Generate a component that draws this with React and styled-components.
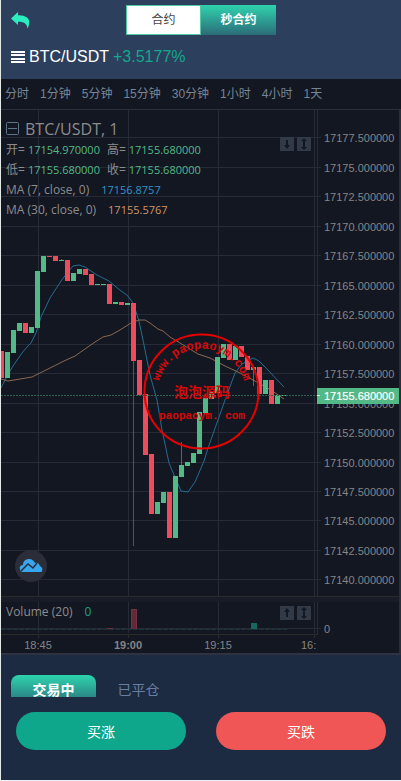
import React from 'react';
import styled, {createGlobalStyle, css} from 'styled-components';

const GlobalStyle = createGlobalStyle`
    body {
        margin: 0;
        background: #eef2f4;
        font-family: "Liberation Sans", "Noto Sans CJK SC", sans-serif;
    }
    * {
        box-sizing: border-box;
    }
    button {
        font-family: inherit;
        border: 0;
        padding: 0;
        background: none;
        cursor: pointer;
    }
`
const green = '#53b987';
const red = '#eb4d5c';
const grid = '#272b38';
const axisLine = '#2b2b2a';

const Page = styled.div`
    border-left: 1px solid #e3e9e6;
    background: #1c2b42;
`
const Header = styled.header`
    padding: 5px 10px 12px;
    background: #2c3f5c;
`
const TopBar = styled.div`
    display: grid;
    grid-template-columns: 1fr 150px 1fr;
    height: 30px;
`
const BackButton = styled.button`
    justify-self: start;
    height: 30px;
    line-height: 0;
`
const Segments = styled.div`
    display: flex;
`
const Segment = styled.button`
    width: 75px;
    height: 30px;
    font-size: 12px;
    line-height: 28px;
    color: #444;
    background: #fff;
    border: 1px solid #54c9a3;
    ${props => props.$active && css`
        color: #fff;
        font-weight: bold;
        border: 0;
        background: linear-gradient(#2fd3ad, #2b6c78);
    `}
`
const PairBar = styled.div`
    display: flex;
    align-items: center;
    gap: 4px;
    height: 32px;
    padding-top: 12px;
    font-size: 16px;
    line-height: 20px;
    color: #fff;
`
const PairName = styled.h1`
    margin: 0;
    font-size: 16px;
    font-weight: normal;
`
const Change = styled.span`
    color: #12a88c;
`
const MenuButton = styled.button`
    line-height: 0;
`
const Periods = styled.nav`
    display: flex;
    gap: 11px;
    height: 31px;
    padding: 0 4px;
    background: #131722;
    border-bottom: 1px solid #2c303d;
`
const Period = styled.button`
    font-size: 12px;
    line-height: 28px;
    white-space: nowrap;
    color: #758696;
`
const Chart = styled.section`
    position: relative;
    display: grid;
    grid-template-columns: 1fr 82px;
    background: #131722;
    border-right: 2px solid #2a2e3b;
    border-bottom: 2px solid #2f3241;
    svg {
        display: block;
    }
`
const Plot = styled.svg`
    width: 100%;
    height: 543px;
`
const Axis = styled.svg`
    width: 82px;
    height: 543px;
`
const AxisText = styled.text`
    font-size: 11px;
    fill: ${props => props.$light ? '#fff' : '#858585'};
    font-weight: ${props => props.$bold ? 'bold' : 'normal'};
`
const StampText = styled.text`
    font-family: "Liberation Mono", "Noto Sans CJK SC", monospace;
    font-weight: bold;
    font-size: ${props => props.$size};
    fill: #d80808;
`
const Legend = styled.div`
    position: absolute;
    top: 8px;
    left: 5px;
    font-family: "Open Sans", "Noto Sans CJK SC", sans-serif;
    font-size: 12px;
    color: #8c8c8c;
`
const LegendTitle = styled.div`
    display: flex;
    align-items: center;
    gap: 5px;
    height: 22px;
    font-size: 16px;
    font-weight: 500;
`
const LegendRow = styled.div`
    display: flex;
    gap: ${props => props.$wide ? '12px' : '3px'};
    height: 20px;
    line-height: 20px;
    white-space: nowrap;
`
const Value = styled.span`
    width: ${props => props.$fixed ? '76px' : 'auto'};
    font-size: ${props => props.$large ? '12px' : '11px'};
    font-weight: 500;
    color: ${props => props.color};
`
const VolumeLegend = styled(Legend)`
    top: 492px;
`
const Tools = styled.div`
    position: absolute;
    top: ${props => props.$top};
    right: 88px;
    display: flex;
    gap: 3px;
`
const ToolButton = styled.button`
    width: 14px;
    height: 14px;
    background: #323a48;
`
const Logo = styled.a`
    position: absolute;
    left: 14px;
    top: 440px;
    width: 32px;
    height: 32px;
    border-radius: 50%;
    background: #2b2e39;
`
const Tabs = styled.div`
    display: flex;
    height: 42px;
    padding: 20px 10px 0;
    overflow: hidden;
`
const Tab = styled.button`
    flex: none;
    width: 85px;
    height: 30px;
    font-size: 14px;
    line-height: 30px;
    color: #6a7f9f;
    ${props => props.$active && css`
        color: #fff;
        font-weight: bold;
        border-radius: 8px 8px 0 0;
        background: linear-gradient(#2dd5ae, #2b6c78);
    `}
`
const Actions = styled.div`
    display: grid;
    grid-template-columns: 1fr 1fr;
    gap: 30px;
    padding: 15px 15px 30px;
`
const TradeButton = styled.button`
    height: 38px;
    border-radius: 19px;
    font-size: 14px;
    color: #fff;
    background: ${props => props.$up ? '#0ea78b' : '#f05656'};
`

const periods = ['分时', '1分钟', '5分钟', '15分钟', '30分钟', '1小时', '4小时', '1天'];
const times = [{x: 37, label: '18:45'}, {x: 127, label: '19:00', bold: true}, {x: 217, label: '19:15'}];
const gridColumns = [37, 127, 217, 313];
const levels = [27, 57, 86, 116, 145, 175, 204, 234, 263, 293, 322, 352, 381, 410, 440, 469];

// direction, body top, body bottom, wick top, wick bottom
const candles = [
    ['r', 241, 268], ['g', 242, 268], ['g', 220, 243], ['g', 213, 221], ['r', 213, 223], ['g', 217, 223],
    ['g', 161, 218], ['g', 146, 162], ['r', 146, 147], ['r', 146, 151], ['g', 150, 151, 149, 151], ['r', 150, 171],
    ['g', 163, 171], ['g', 159, 164], ['r', 159, 165], ['r', 164, 175], ['g', 174, 175], ['g', 174, 175],
    ['r', 174, 194], ['g', 192, 194], ['r', 192, 195], ['g', 193, 195], ['r', 193, 251, 193, 436], ['r', 250, 285],
    ['r', 284, 345], ['r', 344, 404], ['g', 392, 404], ['g', 382, 393], ['r', 382, 428], ['g', 366, 428],
    ['g', 355, 367, 332, 367], ['g', 352, 356], ['g', 343, 353], ['g', 302, 344], ['g', 288, 303], ['g', 282, 289],
    ['g', 247, 283], ['g', 234, 248], ['r', 234, 250], ['g', 236, 250], ['r', 236, 247], ['r', 246, 260],
    ['g', 257, 260, 257, 276], ['r', 257, 284], ['g', 270, 284], ['r', 270, 294], ['g', 285, 294], ['g', 285, 286],
];
const ma7 = '0,278 5,268 12,256 21,243 26,237 30,233 35,223 40,207 49,188 60,171 67,162 72,156 78,155 84,157 96,165 108,171 120,181 126,185 132,193 138,211 143,235 149,265 156,290 161,320 168,353 176,372 180,381 187,382 194,372 203,351 207,338 212,324 224,290 234,263 241,254 252,248 258,251 265,258 283,277';
const ma30 = '0,269 7,271 19,269 31,267 39,263 49,258 63,251 74,246 84,239 94,232 102,227 110,225 119,220 130,213 138,210 144,210 149,213 157,219 162,221 169,227 179,233 197,244 209,248 224,256 239,263 254,271 270,280 283,289';

function Candle({data, index}){
    const [dir, top, bottom, high, low] = data;
    const fill = dir === 'g' ? green : red;
    const x = index * 6 - 2;
    return <g fill={fill}>
        {high && <rect x={x + 2} y={high} width="1" height={low - high} opacity="0.6"/>}
        <rect x={x} y={top} width="5" height={bottom - top}/>
    </g>
}
function Stamp(){
    return <g>
        <circle cx="200.5" cy="281.5" r="57" fill="none" stroke="#e60000" strokeWidth="2"/>
        <path id="stampArc" d="M157 276A44 44 0 0 1 244 276" fill="none"/>
        <StampText $size="12px" textAnchor="middle">
            <textPath href="#stampArc" startOffset="50%">www.paopaoym.com</textPath>
        </StampText>
        <StampText $size="14px" x="201" y="287" textAnchor="middle">泡泡源码</StampText>
        <StampText $size="11px" x="201" y="309" textAnchor="middle">paopaoym. com</StampText>
    </g>
}
function PricePlot(){
    return (
        <Plot>
            <g fill={grid}>
                {levels.map(y => <rect key={y} x="0" y={y} width="100%" height="1"/>)}
                <rect x="0" y="518" width="100%" height="1"/>
                {gridColumns.map(x => <rect key={x} x={x} y="0" width="1" height="523"/>)}
            </g>
            <rect x="0" y="486" width="100%" height="1" fill={axisLine}/>
            <rect x="0" y="487" width="100%" height="5" fill="#181c27"/>
            <rect x="0" y="524" width="100%" height="1" fill={axisLine}/>
            {gridColumns.map(x => <rect key={x} x={x} y="525" width="1" height="3" fill={axisLine}/>)}
            <polyline points={ma7} fill="none" stroke="#246c92"/>
            <polyline points={ma30} fill="none" stroke="#8a6850"/>
            {candles.map((data, i) => <Candle key={i} data={data} index={i}/>)}
            <line x1="0" y1="285.5" x2="100%" y2="285.5" stroke="#30604f" strokeDasharray="2 1"/>
            <rect x="106" y="518" width="6" height="1" fill="#742f3f"/>
            <rect x="130" y="499" width="6" height="20" fill="#5f2a39"/>
            <path d="M130.5 519V499.5H135.5V519" fill="none" stroke="#7a3040"/>
            <rect x="250" y="513" width="6" height="6" fill="#15675f"/>
            <path d="M0 519.5H286" stroke="#1b3439" strokeDasharray="5 1"/>
            {times.map(t => (
                <AxisText key={t.x} x={t.x} y="539" textAnchor="middle" $bold={t.bold}>{t.label}</AxisText>
            ))}
            <AxisText x="300" y="539">16:</AxisText>
            <Stamp/>
        </Plot>
    );
}
function PriceAxis(){
    return (
        <Axis>
            <rect x="0" y="0" width="1" height="525" fill={axisLine}/>
            <rect x="0" y="486" width="82" height="1" fill={axisLine}/>
            <rect x="0" y="487" width="82" height="5" fill="#181c27"/>
            {levels.map((y, i) => (
                <g key={y}>
                    <rect x="1" y={y} width="3" height="1" fill={axisLine}/>
                    <AxisText x="7" y={y + 5}>{(17177.5 - i * 2.5).toFixed(6)}</AxisText>
                </g>
            ))}
            <rect x="1" y="518" width="3" height="1" fill={axisLine}/>
            <AxisText x="7" y="523">0</AxisText>
            <rect x="0" y="278" width="82" height="16" fill={green}/>
            <rect x="0" y="285" width="3" height="1" fill="#cfeadd"/>
            <AxisText x="7" y="290" $light stroke="#fff" strokeWidth="0.2">17155.680000</AxisText>
        </Axis>
    );
}
function Tool({label, d}){
    return <ToolButton aria-label={label}>
        <svg width="14" height="14" viewBox="0 0 14 14" fill="#131722">
            <path d={d}/>
        </svg>
    </ToolButton>
}
const downArrow = 'M6 3H8V8H10L7 12L4 8H6Z';
const upArrow = 'M6 11H8V6H10L7 2L4 6H6Z';
const bothArrow = 'M7 1L10 4H8V10H10L7 13L4 10H6V4H4Z';

function TradingChart(){
    return (
        <Chart>
            <PricePlot/>
            <PriceAxis/>
            <Legend>
                <LegendTitle>
                    <svg width="14" height="14" viewBox="0 0 14 14" fill="none" stroke="#5d7587">
                        <rect x="0.5" y="0.5" width="12" height="12" rx="1"/>
                        <path d="M2 6.5H11"/>
                    </svg>
                    BTC/USDT, 1
                </LegendTitle>
                <LegendRow>
                    <span>开=</span><Value $fixed color={green}>17154.970000</Value>
                    <span>高=</span><Value color={green}>17155.680000</Value>
                </LegendRow>
                <LegendRow>
                    <span>低=</span><Value $fixed color={green}>17155.680000</Value>
                    <span>收=</span><Value color={green}>17155.680000</Value>
                </LegendRow>
                <LegendRow $wide>
                    <span>MA (7, close, 0)</span><Value color="#3094c4">17156.8757</Value>
                </LegendRow>
                <LegendRow $wide>
                    <span>MA (30, close, 0)</span><Value color="#cf9668">17155.5767</Value>
                </LegendRow>
            </Legend>
            <Tools $top="27px">
                <Tool label="下移" d={downArrow}/>
                <Tool label="最大化" d={bothArrow}/>
            </Tools>
            <Logo href="#" aria-label="图表">
                <svg width="32" height="32" viewBox="0 0 32 32">
                    <path d="M5 19C4 17 6 15 8 15C8 11 11 9 14 9C17 9 19 11 20 13C23 12 24 14 25 16C27 17 28 19 27 21C27 22 26 22 25 22H8C6 22 5 21 5 19Z" fill="#37a6ef"/>
                    <path d="M6 21L13 14L18 18L22 13" fill="none" stroke="#2b2e39" strokeWidth="1.5"/>
                </svg>
            </Logo>
            <VolumeLegend>
                <LegendRow $wide>
                    <span>Volume (20)</span><Value $large color="#21a08c">0</Value>
                </LegendRow>
            </VolumeLegend>
            <Tools $top="496px">
                <Tool label="上移" d={upArrow}/>
                <Tool label="最大化" d={bothArrow}/>
            </Tools>
        </Chart>
    );
}
export default function App() {
    return <>
        <GlobalStyle/>
        <Page>
            <Header>
                <TopBar>
                    <BackButton aria-label="返回">
                        <svg width="19" height="17" viewBox="0 0 19 17" fill="#2bedc0">
                            <path d="M0 6.5L7 0V3.3C14 3 18.5 6 18.3 10.5C18.2 12.5 17.5 15 16.3 16.5C16.4 12 13 9.5 7 9.7V13Z"/>
                        </svg>
                    </BackButton>
                    <Segments>
                        <Segment>合约</Segment>
                        <Segment $active>秒合约</Segment>
                    </Segments>
                </TopBar>
                <PairBar>
                    <MenuButton aria-label="菜单">
                        <svg width="14" height="12" viewBox="0 0 14 12" fill="#fff">
                            <path d="M0 0H14V2H0ZM0 3H14V5H0ZM0 7H14V9H0ZM0 10H14V12H0Z"/>
                        </svg>
                    </MenuButton>
                    <PairName>BTC/USDT</PairName>
                    <Change>+3.5177%</Change>
                </PairBar>
            </Header>
            <Periods>
                {periods.map(p => <Period key={p}>{p}</Period>)}
            </Periods>
            <TradingChart/>
            <Tabs>
                <Tab $active>交易中</Tab>
                <Tab>已平仓</Tab>
            </Tabs>
            <Actions>
                <TradeButton $up>买涨</TradeButton>
                <TradeButton>买跌</TradeButton>
            </Actions>
        </Page>
    </>
}
